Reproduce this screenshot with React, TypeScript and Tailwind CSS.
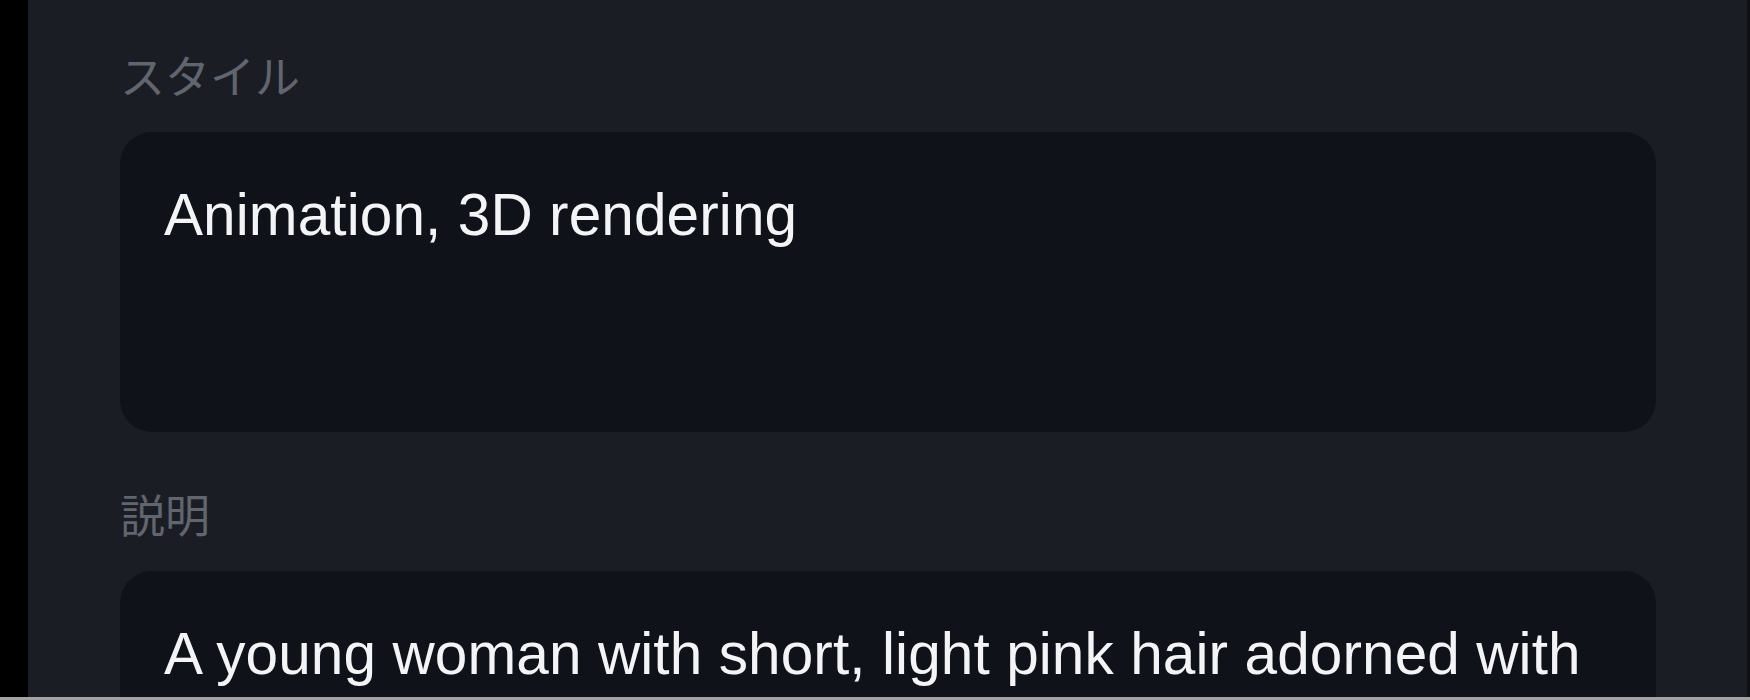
const fields = [
  { label: "スタイル", value: "Animation, 3D rendering", boxClass: "h-[300px]" },
  {
    label: "説明",
    value: "A young woman with short, light pink hair adorned with",
    boxClass: "h-[300px]",
  },
];

function Field({ label, value, boxClass }: { label: string; value: string; boxClass: string }) {
  return (
    <div className="flex flex-col">
      <div className="text-[45px] leading-[45px] text-[#61656d] font-['Noto_Sans_CJK_JP',sans-serif]">
        {label}
      </div>
      <div
        className={`mt-[35px] rounded-[32px] bg-[#10121a] px-[44px] pt-[42px] text-[58.5px] leading-[81px] tracking-[0.1px] text-[#f3f4f6] font-['Liberation_Sans','Noto_Sans_CJK_JP',sans-serif] ${boxClass}`}
      >
        {value}
      </div>
    </div>
  );
}

export default function App() {
  return (
    <div className="flex h-[700px] w-[1750px] flex-col overflow-hidden bg-black">
      <div className="flex min-h-0 flex-1">
        <div className="w-[28px] shrink-0 bg-black" />
        {/* フォームパネル */}
        <div className="flex min-w-0 flex-1 flex-col gap-[59px] overflow-hidden bg-[#1b1d25] pl-[92px] pr-[91px] pt-[52px]">
          {fields.map((f) => (
            <Field key={f.label} {...f} />
          ))}
        </div>
        <div className="w-[3px] shrink-0 bg-[#0f1116]" />
      </div>
      <div className="h-[3px] shrink-0 bg-[#a3a3a3]" />
    </div>
  );
}
